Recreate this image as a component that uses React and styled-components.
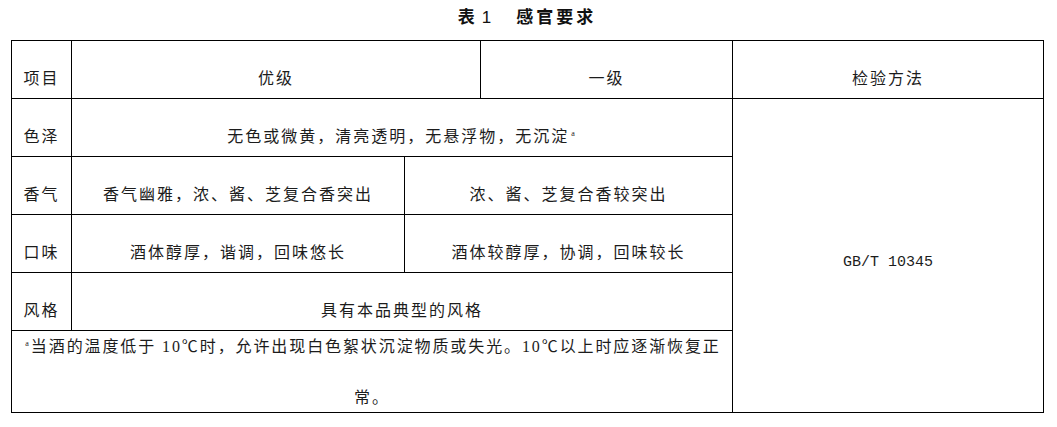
import React from "react";
import styled, { createGlobalStyle } from "styled-components";

const GlobalStyle = createGlobalStyle`
    html, body {
        margin: 0;
        padding: 0;
        background: #fff;
    }
    body {
        font-family: "Liberation Serif", "Noto Sans CJK SC", serif;
        color: #1c1c1c;
    }
`;

const rows = [
    { name: "色泽", text: "无色或微黄，清亮透明，无悬浮物，无沉淀", note: true },
    { name: "香气", first: "香气幽雅，浓、酱、芝复合香突出", second: "浓、酱、芝复合香较突出" },
    { name: "口味", first: "酒体醇厚，谐调，回味悠长", second: "酒体较醇厚，协调，回味较长" },
    { name: "风格", text: "具有本品典型的风格" },
];

function App() {
    return (
        <Page>
            <GlobalStyle />
            <Title>
                表<Num>1</Num>感官要求
            </Title>
            <Table>
                <colgroup>
                    <col style={{ width: 60 }} />
                    <col style={{ width: 333 }} />
                    <col style={{ width: 76 }} />
                    <col style={{ width: 252 }} />
                    <col style={{ width: 311 }} />
                </colgroup>
                <tbody>
                    <Row>
                        <Cell>项目</Cell>
                        <Cell colSpan={2}>优级</Cell>
                        <Cell>一级</Cell>
                        <Cell>检验方法</Cell>
                    </Row>
                    {rows.map((r, i) => (
                        <Row key={r.name}>
                            <Cell>{r.name}</Cell>
                            {r.text ? (
                                <Cell colSpan={3}>
                                    {r.text}
                                    {r.note && <Mark>a</Mark>}
                                </Cell>
                            ) : (
                                <>
                                    <Cell>{r.first}</Cell>
                                    <Cell colSpan={2}>{r.second}</Cell>
                                </>
                            )}
                            {i === 0 && (
                                <Method rowSpan={5}>GB/T 10345</Method>
                            )}
                        </Row>
                    ))}
                    <NoteRow>
                        <Note colSpan={4}>
                            <NoteText>
                                <Mark>a</Mark>当酒的温度低于 10℃时，允许出现白色絮状沉淀物质或失光。10℃以上时应逐渐恢复正常。
                            </NoteText>
                        </Note>
                    </NoteRow>
                </tbody>
            </Table>
        </Page>
    );
}

const Page = styled.div`
    width: 1057px;
    height: 427px;
    padding-left: 11px;
    box-sizing: border-box;
    overflow: hidden;
`;

const Title = styled.div`
    width: 1032px;
    height: 40px;
    line-height: 31px;
    text-align: center;
    font-family: "Noto Sans CJK SC", sans-serif;
    font-weight: 700;
    font-size: 17px;
    letter-spacing: 3px;
    color: #111;
`;

const Num = styled.span`
    font-family: "Liberation Sans", sans-serif;
    font-weight: 400;
    margin: 0 22px 0 4px;
`;

const Table = styled.table`
    width: 1032px;
    border-collapse: collapse;
    table-layout: fixed;
`;

const Row = styled.tr`
    height: 58px;
`;

const NoteRow = styled.tr`
    height: 81px;
`;

const Cell = styled.td`
    border: 1px solid #000;
    padding: 14px 0 0;
    text-align: center;
    vertical-align: middle;
    font-size: 16px;
    letter-spacing: 2px;
    white-space: nowrap;
`;

const Method = styled.td`
    border: 1px solid #000;
    padding: 14px 0 0;
    text-align: center;
    vertical-align: middle;
    font-family: "Liberation Mono", monospace;
    font-size: 15px;
`;

const Note = styled.td`
    border: 1px solid #000;
    padding: 0 3px;
    height: 81px;
    text-align: center;
    vertical-align: middle;
    font-size: 16px;
    letter-spacing: 1.9px;
`;

const NoteText = styled.div`
    line-height: 51px;
    margin: -10px 0 -11px;
`;

const Mark = styled.sup`
    font-size: 8px;
    letter-spacing: 0;
    vertical-align: 6px;
    line-height: 0;
    margin: 0 2px;
`;

export default App;
